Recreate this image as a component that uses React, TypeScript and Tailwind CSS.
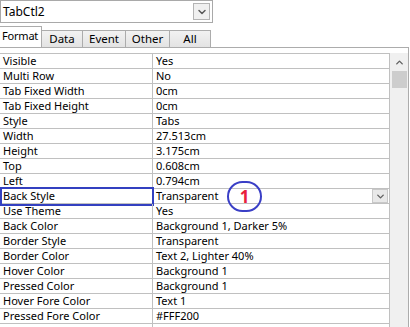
import { ChevronDown, ChevronUp } from 'lucide-react'

const rows: [string, string][] = [
  ['Visible', 'Yes'],
  ['Multi Row', 'No'],
  ['Tab Fixed Width', '0cm'],
  ['Tab Fixed Height', '0cm'],
  ['Style', 'Tabs'],
  ['Width', '27.513cm'],
  ['Height', '3.175cm'],
  ['Top', '0.608cm'],
  ['Left', '0.794cm'],
  ['Back Style', 'Transparent'],
  ['Use Theme', 'Yes'],
  ['Back Color', 'Background 1, Darker 5%'],
  ['Border Style', 'Transparent'],
  ['Border Color', 'Text 2, Lighter 40%'],
  ['Hover Color', 'Background 1'],
  ['Pressed Color', 'Background 1'],
  ['Hover Fore Color', 'Text 1'],
  ['Pressed Fore Color', '#FFF200'],
  ['', ''],
]

const tabs = ['Data', 'Event', 'Other', 'All']
const tabWidths = ['w-[41px]', 'w-[43px]', 'w-[44px]', 'w-[41px]']

function SmallDrop() {
  return (
    <div className="flex h-[14px] w-[16px] items-center justify-center border border-[#c8c8c8] bg-[#e8e8e8]">
      <ChevronDown size={11} strokeWidth={3} className="text-[#606060]" />
    </div>
  )
}

export default function App() {
  return (
    <div className="relative h-[327px] w-[410px] overflow-hidden bg-white text-black" style={{ fontFamily: '"Noto Sans", "Open Sans", sans-serif' }}>
      {/* object combo */}
      <div className="flex h-[23px] w-[213px] items-center justify-between border border-[#a9a9a9] pl-[2px] pr-[2px]">
        <span className="text-[12px] leading-none">TabCtl2</span>
        <div className="flex h-[17px] w-[17px] items-center justify-center border border-[#b4b4b4] bg-[#f0f0f0]">
          <ChevronDown size={12} strokeWidth={3} className="text-[#5a5a5a]" />
        </div>
      </div>

      {/* tabs */}
      <div className="mt-[4px] flex h-[20px] items-end">
        <div className="relative z-10 flex h-[21px] w-[42px] items-center border-r border-t border-[#acacac] bg-white pl-[2px] pb-[2px] text-[11px] tracking-[-0.2px]">
          Format
        </div>
        {tabs.map((t, i) => (
          <div
            key={t}
            className={`flex h-[17px] ${tabWidths[i]} items-center justify-center border-r border-t border-[#acacac] bg-gradient-to-b from-[#f2f2f2] to-[#e3e3e3] text-[11.5px]`}
          >
            {t}
          </div>
        ))}
      </div>

      {/* panel */}
      <div className="w-[409px] border-r border-t border-[#acacac] pt-[5px]" style={{ height: 280 }}>
        <div className="flex">
          <div className="w-[390px] border-r border-t border-[#c0c0c0]">
            {rows.map(([name, value], i) => (
              <div key={i} className="relative flex h-[15px] border-b border-[#c0c0c0] text-[11px] leading-[14px]">
                <div className="w-[153px] shrink-0 truncate border-r border-[#c0c0c0] pl-[3px]">{name}</div>
                <div className="flex flex-1 items-center justify-between pl-[3px] pr-[1px]">
                  <span className="leading-[14px]">{value}</span>
                  {i === 9 && <SmallDrop />}
                </div>
                {i === 9 && (
                  <div className="pointer-events-none absolute left-0 top-[-2px] h-[19px] w-[154px] border-2 border-[#3340c0]" />
                )}
              </div>
            ))}
          </div>
          <div className="flex w-[18px] flex-col items-center bg-[#f0f0f0]">
            <ChevronUp size={11} strokeWidth={3} className="mt-[4px] text-[#606060]" />
            <div className="mt-[3px] h-[17px] w-[15px] bg-[#cdcdcd]" />
          </div>
        </div>
      </div>

      {/* callout marker */}
      <div className="absolute left-[227px] top-[181px] flex h-[31px] w-[35px] items-center justify-center rounded-full border-2 border-[#3a3fc6]">
        <span className="text-[17px] font-bold leading-none text-[#e8203c]">1</span>
      </div>
    </div>
  )
}
